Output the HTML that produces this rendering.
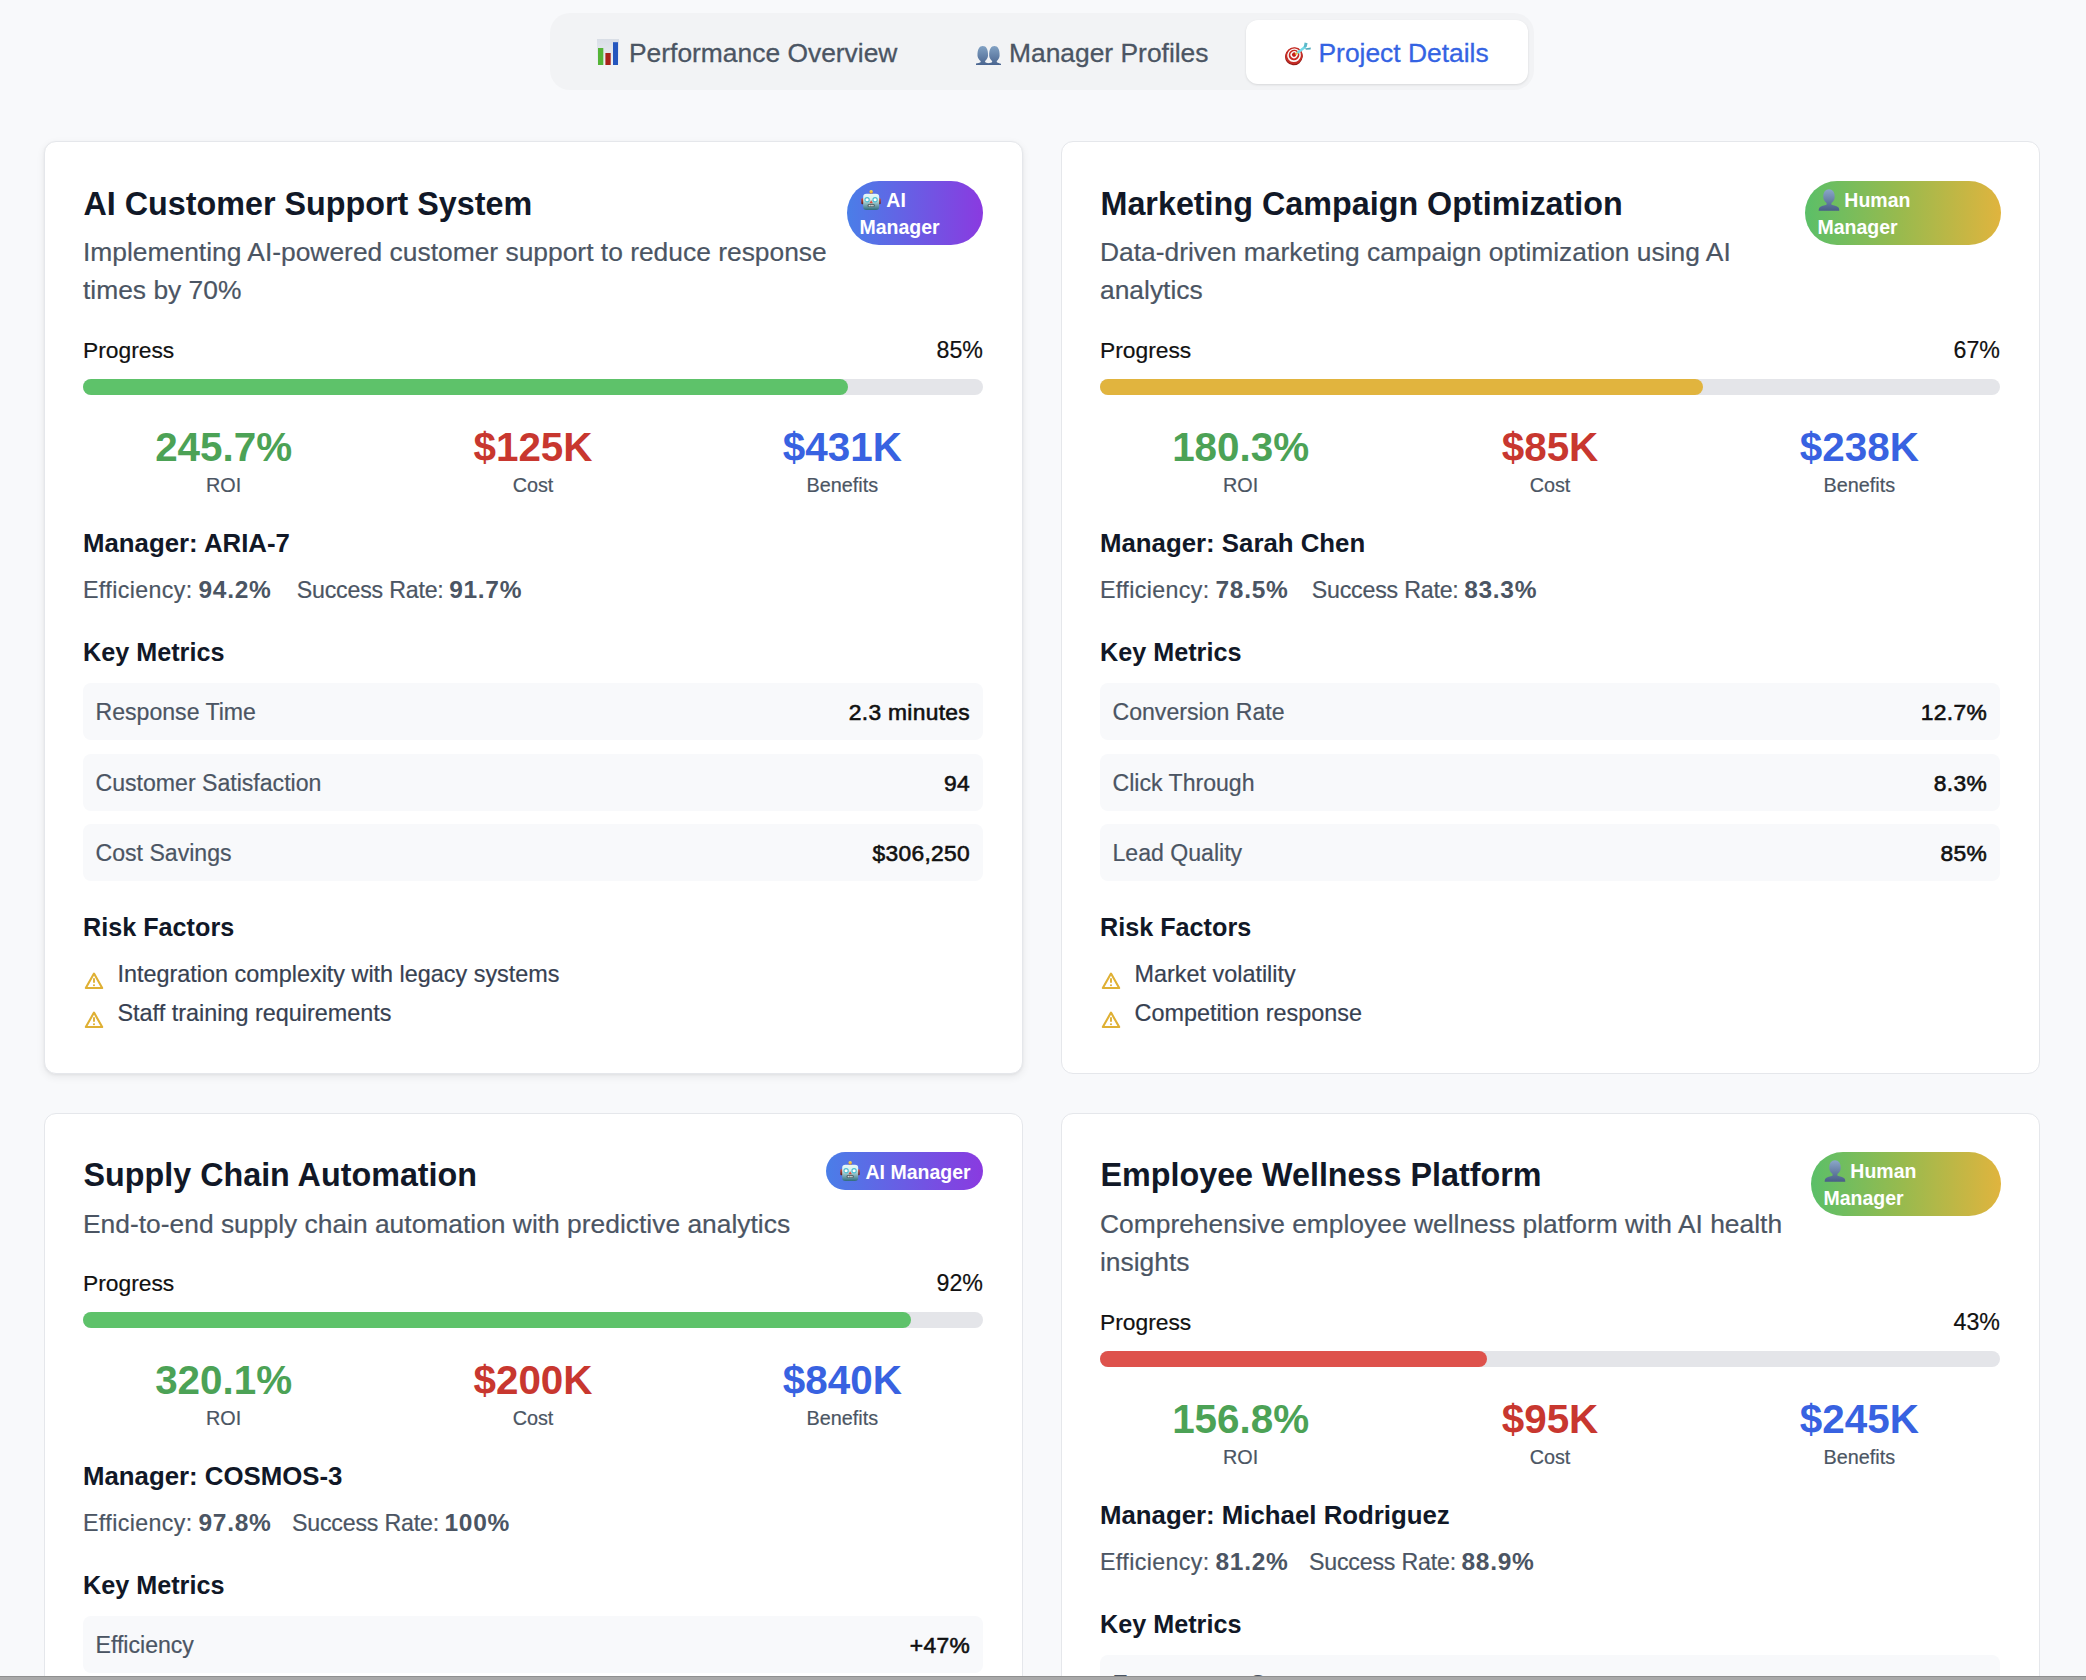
<!DOCTYPE html>
<html><head><meta charset="utf-8"><title>Project Details</title>
<style>
html,body{margin:0;padding:0;}
body{width:2086px;height:1680px;overflow:hidden;position:relative;background:#f8f9fb;font-family:"Liberation Sans",sans-serif;}
.t{position:absolute;margin:0;}
.card{position:absolute;box-sizing:border-box;background:#fff;border:1.5px solid #e5e7eb;border-radius:12px;}
.sh{box-shadow:0 3px 8px rgba(0,0,0,.07),0 1px 3px rgba(0,0,0,.05);}
b{font-weight:700;}
</style></head><body>
<div class="t" style="left:550.00px;top:13.00px;width:984.00px;height:77.00px;background:#f2f3f5;border-radius:20px;"></div><div class="t" style="left:1246.00px;top:20.00px;width:282.00px;height:64.00px;background:#fff;border-radius:12px;box-shadow:0 1px 3px rgba(0,0,0,.08),0 1px 2px rgba(0,0,0,.04);"></div><svg class="t" style="left:597.00px;top:39.00px" width="22" height="26" viewBox="0 0 22 26"><defs><linearGradient id="cbg" x1="0" y1="0" x2="0" y2="1"><stop offset="0" stop-color="#d9dee6"/><stop offset="1" stop-color="#eef1f5"/></linearGradient></defs><rect x="0" y="0" width="22" height="26" fill="url(#cbg)"/><rect x="1" y="9" width="5.3" height="17" fill="#55b437"/><rect x="8.4" y="14" width="5.3" height="12" fill="#a9231a"/><rect x="16" y="3.2" width="5" height="22.8" fill="#2456be"/></svg><div class="t" style="left:629.00px;top:35.55px;font-size:26.4px;line-height:34px;color:#4b5563;white-space:nowrap;-webkit-text-stroke:0.3px #4b5563;">Performance Overview</div><svg class="t" style="left:976.00px;top:44.80px" width="25" height="20" viewBox="0 0 25 20"><defs><linearGradient id="bg1" x1="0" y1="0" x2="0" y2="1"><stop offset="0" stop-color="#82a2c4"/><stop offset="1" stop-color="#4a6590"/></linearGradient></defs><path d="M1.5 11 C1.2 4 3.5 1 6.8 1 C10.2 1 12.3 4 12 11 C11.6 13.5 10.3 15 9 16 L9.3 17.3 C10.6 18 12 18.4 14 18.8 L14 20 L0 20 L0 18.6 C2 18.2 3.5 17.8 4.6 17.3 L4.7 16 C3.3 15 2 13.5 1.5 11Z" fill="url(#bg1)"/><path d="M13.2 11 C12.9 4 15.2 1 18.4 1 C21.7 1 23.9 4 23.6 11 C23.2 13.5 22 15 20.7 16 L20.9 17.3 C22.2 18 23.3 18.4 25 18.8 L25 20 L10 20 L10 18.8 C12.5 18.4 14.5 17.8 16 17.3 L16.2 16 C14.9 15 13.6 13.5 13.2 11Z" fill="url(#bg1)"/></svg><div class="t" style="left:1009.00px;top:35.55px;font-size:26.4px;line-height:34px;color:#4b5563;white-space:nowrap;-webkit-text-stroke:0.3px #4b5563;">Manager Profiles</div><svg class="t" style="left:1283.00px;top:40.00px" width="30" height="26" viewBox="0 0 30 26"><g transform="rotate(-40 11 15.7)"><ellipse cx="10.4" cy="16.3" rx="9" ry="8.6" fill="#8f1c18"/><ellipse cx="11" cy="15.7" rx="8.8" ry="8.4" fill="#c62d25"/><ellipse cx="11.3" cy="15.4" rx="7" ry="6.7" fill="#fbf7f7"/><ellipse cx="11.5" cy="15.2" rx="5.4" ry="5.2" fill="#c92a22"/><ellipse cx="11.7" cy="15" rx="3.7" ry="3.5" fill="#fbf7f7"/><ellipse cx="11.8" cy="14.9" rx="2.2" ry="2.1" fill="#c41e1a"/></g><path d="M12.3 14.4 L15.6 11.9" stroke="#e8c43c" stroke-width="1.8"/><path d="M15.2 12.2 L22 7" stroke="#72dbe9" stroke-width="2.4" stroke-linecap="round"/><path d="M20.6 7.6 L21.6 2.6 L24.6 3.2 L23.6 7 Z" fill="#5bb9ca"/><path d="M21.6 8.4 L27.8 7.6 L27.6 9.6 L23.2 9.8 Z" fill="#4fa9bb"/></svg><div class="t" style="left:1318.50px;top:35.55px;font-size:26.4px;line-height:34px;color:#3463e3;white-space:nowrap;-webkit-text-stroke:0.3px #3463e3;">Project Details</div><div class="card sh" style="left:44px;top:141px;width:979px;height:933px"></div><div class="t" style="left:83.50px;top:184.01px;font-size:32.3px;line-height:40px;color:#111827;font-weight:700;white-space:nowrap;">AI Customer Support System</div><div class="t" style="left:847.00px;top:181.00px;width:136.00px;height:64.00px;background:linear-gradient(90deg,#4a7ee8,#8a3ae0);border-radius:40px;"></div><svg class="t" style="left:860.80px;top:189.50px" width="20" height="20" viewBox="0 0 22 22"><defs><linearGradient id="rb" x1="0" y1="0" x2="0" y2="1"><stop offset="0" stop-color="#e8faf8"/><stop offset=".35" stop-color="#d6eeee"/><stop offset=".6" stop-color="#8fbcc2"/><stop offset="1" stop-color="#2f6a7c"/></linearGradient><linearGradient id="re" x1="0" y1="0" x2="0" y2="1"><stop offset="0" stop-color="#d0503f"/><stop offset="1" stop-color="#5e1a18"/></linearGradient><linearGradient id="ra" x1="0" y1="0" x2="0" y2="1"><stop offset="0" stop-color="#fbe35a"/><stop offset="1" stop-color="#e89a2a"/></linearGradient></defs><rect x="0.3" y="9.2" width="3" height="6.4" rx="1.3" fill="url(#re)"/><rect x="18.7" y="9.2" width="3" height="6.4" rx="1.3" fill="url(#re)"/><rect x="9.6" y="2.5" width="3.2" height="2.5" fill="#6b4a8a"/><circle cx="11.2" cy="1.9" r="1.9" fill="url(#ra)"/><rect x="2.4" y="4" width="17.6" height="18" rx="3.6" fill="url(#rb)"/><circle cx="6.7" cy="10.7" r="2.35" fill="#fff" stroke="#4bbdd2" stroke-width="1.2"/><circle cx="15.5" cy="10.7" r="2.35" fill="#fff" stroke="#4bbdd2" stroke-width="1.2"/><path d="M11.2 11.4 L13 14.6 L9.4 14.6Z" fill="#dc4a3c"/><rect x="7.2" y="15.5" width="7.9" height="3.3" rx="1.6" fill="#465a62"/><rect x="8.4" y="16.3" width="1.6" height="1.7" fill="#d5dcdc"/><rect x="10.35" y="16.3" width="1.6" height="1.7" fill="#d5dcdc"/><rect x="12.3" y="16.3" width="1.6" height="1.7" fill="#d5dcdc"/></svg><div class="t" style="left:886.30px;top:187.44px;font-size:19.5px;line-height:26px;color:#fff;font-weight:700;">AI</div><div class="t" style="left:859.50px;top:213.64px;font-size:19.5px;line-height:26px;color:#fff;font-weight:700;">Manager</div><div class="t" style="left:83.00px;top:232.65px;font-size:26.4px;line-height:38px;color:#4b5563;-webkit-text-stroke:0.2px #4b5563;white-space:nowrap;">Implementing AI-powered customer support to reduce response</div><div class="t" style="left:83.00px;top:270.55px;font-size:26.4px;line-height:38px;color:#4b5563;-webkit-text-stroke:0.2px #4b5563;white-space:nowrap;">times by 70%</div><div class="t" style="left:83.00px;top:334.90px;font-size:22.8px;line-height:30px;color:#111;-webkit-text-stroke:0.2px #111;">Progress</div><div class="t" style="left:83.00px;top:334.76px;font-size:23.2px;line-height:30px;color:#111;-webkit-text-stroke:0.2px #111;width:900.00px;text-align:right;">85%</div><div class="t" style="left:83.00px;top:379.00px;width:900.00px;height:16.00px;background:#e4e5e9;border-radius:8px;"></div><div class="t" style="left:83.00px;top:379.00px;width:765.00px;height:16.00px;background:#5ec26a;border-radius:8px;"></div><div class="t" style="left:83.00px;top:423.20px;font-size:40.4px;line-height:48px;color:#4ca256;font-weight:700;width:281.30px;text-align:center;">245.7%</div><div class="t" style="left:83.00px;top:473.04px;font-size:19.8px;line-height:24px;color:#4b5563;-webkit-text-stroke:0.2px #4b5563;width:281.30px;text-align:center;">ROI</div><div class="t" style="left:392.35px;top:423.20px;font-size:40.4px;line-height:48px;color:#c8372f;font-weight:700;width:281.30px;text-align:center;">$125K</div><div class="t" style="left:392.35px;top:473.04px;font-size:19.8px;line-height:24px;color:#4b5563;-webkit-text-stroke:0.2px #4b5563;width:281.30px;text-align:center;">Cost</div><div class="t" style="left:701.70px;top:423.20px;font-size:40.4px;line-height:48px;color:#3862e1;font-weight:700;width:281.30px;text-align:center;">$431K</div><div class="t" style="left:701.70px;top:473.04px;font-size:19.8px;line-height:24px;color:#4b5563;-webkit-text-stroke:0.2px #4b5563;width:281.30px;text-align:center;">Benefits</div><div class="t" style="left:83.00px;top:526.76px;font-size:25.8px;line-height:32px;color:#111827;font-weight:700;white-space:nowrap;">Manager: ARIA-7</div><div class="t" style="left:83.00px;top:574.96px;font-size:23.2px;line-height:30px;color:#4b5563;-webkit-text-stroke:0.2px #4b5563;white-space:nowrap;letter-spacing:0.4px;">Efficiency:</div><div class="t" style="left:198.50px;top:574.51px;font-size:24.5px;line-height:30px;color:#4b5563;font-weight:700;white-space:nowrap;letter-spacing:0.7px;">94.2%</div><div class="t" style="left:296.70px;top:574.96px;font-size:23.2px;line-height:30px;color:#4b5563;-webkit-text-stroke:0.2px #4b5563;white-space:nowrap;letter-spacing:-0.2px;">Success Rate:</div><div class="t" style="left:449.20px;top:574.51px;font-size:24.5px;line-height:30px;color:#4b5563;font-weight:700;white-space:nowrap;letter-spacing:0.7px;">91.7%</div><div class="t" style="left:83.00px;top:636.07px;font-size:25.2px;line-height:32px;color:#111827;font-weight:700;">Key Metrics</div><div class="t" style="left:83.00px;top:683.00px;width:900.00px;height:57.00px;background:#f8f9fb;border-radius:8px;"></div><div class="t" style="left:95.50px;top:697.00px;font-size:23.1px;line-height:30px;color:#4b5563;-webkit-text-stroke:0.2px #4b5563;white-space:nowrap;">Response Time</div><div class="t" style="left:83.00px;top:697.10px;font-size:22.8px;line-height:30px;color:#111;width:887.00px;text-align:right;-webkit-text-stroke:0.6px #111;letter-spacing:0.3px;">2.3 minutes</div><div class="t" style="left:83.00px;top:753.50px;width:900.00px;height:57.00px;background:#f8f9fb;border-radius:8px;"></div><div class="t" style="left:95.50px;top:767.50px;font-size:23.1px;line-height:30px;color:#4b5563;-webkit-text-stroke:0.2px #4b5563;white-space:nowrap;">Customer Satisfaction</div><div class="t" style="left:83.00px;top:767.60px;font-size:22.8px;line-height:30px;color:#111;width:887.00px;text-align:right;-webkit-text-stroke:0.6px #111;letter-spacing:0.3px;">94</div><div class="t" style="left:83.00px;top:824.00px;width:900.00px;height:57.00px;background:#f8f9fb;border-radius:8px;"></div><div class="t" style="left:95.50px;top:838.00px;font-size:23.1px;line-height:30px;color:#4b5563;-webkit-text-stroke:0.2px #4b5563;white-space:nowrap;">Cost Savings</div><div class="t" style="left:83.00px;top:838.10px;font-size:22.8px;line-height:30px;color:#111;width:887.00px;text-align:right;-webkit-text-stroke:0.6px #111;letter-spacing:0.3px;">$306,250</div><div class="t" style="left:83.00px;top:911.37px;font-size:25.2px;line-height:32px;color:#111827;font-weight:700;">Risk Factors</div><svg class="t" style="left:83.50px;top:971.90px" width="20" height="18" viewBox="0 0 20 18"><path d="M10 1.6 L18.2 16 L1.8 16 Z" fill="none" stroke="#dfb034" stroke-width="2.1" stroke-linejoin="round"/><path d="M10 6.2 L10 10.8" stroke="#dfb034" stroke-width="1.9"/><circle cx="10" cy="13.2" r="1.05" fill="#dfb034"/></svg><div class="t" style="left:117.50px;top:958.79px;font-size:23.4px;line-height:30px;color:#374151;-webkit-text-stroke:0.2px #374151;white-space:nowrap;">Integration complexity with legacy systems</div><svg class="t" style="left:83.50px;top:1010.90px" width="20" height="18" viewBox="0 0 20 18"><path d="M10 1.6 L18.2 16 L1.8 16 Z" fill="none" stroke="#dfb034" stroke-width="2.1" stroke-linejoin="round"/><path d="M10 6.2 L10 10.8" stroke="#dfb034" stroke-width="1.9"/><circle cx="10" cy="13.2" r="1.05" fill="#dfb034"/></svg><div class="t" style="left:117.50px;top:997.79px;font-size:23.4px;line-height:30px;color:#374151;-webkit-text-stroke:0.2px #374151;white-space:nowrap;">Staff training requirements</div><div class="card" style="left:1061px;top:141px;width:979px;height:933px"></div><div class="t" style="left:1100.50px;top:184.01px;font-size:32.3px;line-height:40px;color:#111827;font-weight:700;white-space:nowrap;">Marketing Campaign Optimization</div><div class="t" style="left:1805.00px;top:181.00px;width:196.00px;height:64.00px;background:linear-gradient(90deg,#5bbf68 0%,#98ba4e 48%,#e0b43e 100%);border-radius:40px;"></div><svg class="t" style="left:1817.80px;top:189.00px" width="22" height="22" viewBox="0 0 22 22"><defs><linearGradient id="bu" x1="0" y1="0" x2="0" y2="1"><stop offset="0" stop-color="#8ba7c9"/><stop offset="1" stop-color="#485d86"/></linearGradient></defs><path d="M5.3 8.5 C5 3 7.5 0.3 11 0.3 C14.5 0.3 17 3 16.7 8.5 C16.5 11 15 13 13.4 14 L13.5 15.8 C15.5 16.4 19 16.9 20.5 18.5 C21.2 19.5 21.3 20.6 21.3 21.8 L0.7 21.8 C0.7 20.6 0.8 19.5 1.5 18.5 C3 16.9 6.5 16.4 8.5 15.8 L8.6 14 C7 13 5.5 11 5.3 8.5Z" fill="url(#bu)"/></svg><div class="t" style="left:1844.30px;top:187.44px;font-size:19.5px;line-height:26px;color:#fff;font-weight:700;">Human</div><div class="t" style="left:1817.50px;top:213.64px;font-size:19.5px;line-height:26px;color:#fff;font-weight:700;">Manager</div><div class="t" style="left:1100.00px;top:232.65px;font-size:26.4px;line-height:38px;color:#4b5563;-webkit-text-stroke:0.2px #4b5563;white-space:nowrap;">Data-driven marketing campaign optimization using AI</div><div class="t" style="left:1100.00px;top:270.55px;font-size:26.4px;line-height:38px;color:#4b5563;-webkit-text-stroke:0.2px #4b5563;white-space:nowrap;">analytics</div><div class="t" style="left:1100.00px;top:334.90px;font-size:22.8px;line-height:30px;color:#111;-webkit-text-stroke:0.2px #111;">Progress</div><div class="t" style="left:1100.00px;top:334.76px;font-size:23.2px;line-height:30px;color:#111;-webkit-text-stroke:0.2px #111;width:900.00px;text-align:right;">67%</div><div class="t" style="left:1100.00px;top:379.00px;width:900.00px;height:16.00px;background:#e4e5e9;border-radius:8px;"></div><div class="t" style="left:1100.00px;top:379.00px;width:603.00px;height:16.00px;background:#e1b43e;border-radius:8px;"></div><div class="t" style="left:1100.00px;top:423.20px;font-size:40.4px;line-height:48px;color:#4ca256;font-weight:700;width:281.30px;text-align:center;">180.3%</div><div class="t" style="left:1100.00px;top:473.04px;font-size:19.8px;line-height:24px;color:#4b5563;-webkit-text-stroke:0.2px #4b5563;width:281.30px;text-align:center;">ROI</div><div class="t" style="left:1409.35px;top:423.20px;font-size:40.4px;line-height:48px;color:#c8372f;font-weight:700;width:281.30px;text-align:center;">$85K</div><div class="t" style="left:1409.35px;top:473.04px;font-size:19.8px;line-height:24px;color:#4b5563;-webkit-text-stroke:0.2px #4b5563;width:281.30px;text-align:center;">Cost</div><div class="t" style="left:1718.70px;top:423.20px;font-size:40.4px;line-height:48px;color:#3862e1;font-weight:700;width:281.30px;text-align:center;">$238K</div><div class="t" style="left:1718.70px;top:473.04px;font-size:19.8px;line-height:24px;color:#4b5563;-webkit-text-stroke:0.2px #4b5563;width:281.30px;text-align:center;">Benefits</div><div class="t" style="left:1100.00px;top:526.76px;font-size:25.8px;line-height:32px;color:#111827;font-weight:700;white-space:nowrap;">Manager: Sarah Chen</div><div class="t" style="left:1100.00px;top:574.96px;font-size:23.2px;line-height:30px;color:#4b5563;-webkit-text-stroke:0.2px #4b5563;white-space:nowrap;letter-spacing:0.4px;">Efficiency:</div><div class="t" style="left:1215.50px;top:574.51px;font-size:24.5px;line-height:30px;color:#4b5563;font-weight:700;white-space:nowrap;letter-spacing:0.7px;">78.5%</div><div class="t" style="left:1311.70px;top:574.96px;font-size:23.2px;line-height:30px;color:#4b5563;-webkit-text-stroke:0.2px #4b5563;white-space:nowrap;letter-spacing:-0.2px;">Success Rate:</div><div class="t" style="left:1464.20px;top:574.51px;font-size:24.5px;line-height:30px;color:#4b5563;font-weight:700;white-space:nowrap;letter-spacing:0.7px;">83.3%</div><div class="t" style="left:1100.00px;top:636.07px;font-size:25.2px;line-height:32px;color:#111827;font-weight:700;">Key Metrics</div><div class="t" style="left:1100.00px;top:683.00px;width:900.00px;height:57.00px;background:#f8f9fb;border-radius:8px;"></div><div class="t" style="left:1112.50px;top:697.00px;font-size:23.1px;line-height:30px;color:#4b5563;-webkit-text-stroke:0.2px #4b5563;white-space:nowrap;">Conversion Rate</div><div class="t" style="left:1100.00px;top:697.10px;font-size:22.8px;line-height:30px;color:#111;width:887.00px;text-align:right;-webkit-text-stroke:0.6px #111;letter-spacing:0.3px;">12.7%</div><div class="t" style="left:1100.00px;top:753.50px;width:900.00px;height:57.00px;background:#f8f9fb;border-radius:8px;"></div><div class="t" style="left:1112.50px;top:767.50px;font-size:23.1px;line-height:30px;color:#4b5563;-webkit-text-stroke:0.2px #4b5563;white-space:nowrap;">Click Through</div><div class="t" style="left:1100.00px;top:767.60px;font-size:22.8px;line-height:30px;color:#111;width:887.00px;text-align:right;-webkit-text-stroke:0.6px #111;letter-spacing:0.3px;">8.3%</div><div class="t" style="left:1100.00px;top:824.00px;width:900.00px;height:57.00px;background:#f8f9fb;border-radius:8px;"></div><div class="t" style="left:1112.50px;top:838.00px;font-size:23.1px;line-height:30px;color:#4b5563;-webkit-text-stroke:0.2px #4b5563;white-space:nowrap;">Lead Quality</div><div class="t" style="left:1100.00px;top:838.10px;font-size:22.8px;line-height:30px;color:#111;width:887.00px;text-align:right;-webkit-text-stroke:0.6px #111;letter-spacing:0.3px;">85%</div><div class="t" style="left:1100.00px;top:911.37px;font-size:25.2px;line-height:32px;color:#111827;font-weight:700;">Risk Factors</div><svg class="t" style="left:1100.50px;top:971.90px" width="20" height="18" viewBox="0 0 20 18"><path d="M10 1.6 L18.2 16 L1.8 16 Z" fill="none" stroke="#dfb034" stroke-width="2.1" stroke-linejoin="round"/><path d="M10 6.2 L10 10.8" stroke="#dfb034" stroke-width="1.9"/><circle cx="10" cy="13.2" r="1.05" fill="#dfb034"/></svg><div class="t" style="left:1134.50px;top:958.79px;font-size:23.4px;line-height:30px;color:#374151;-webkit-text-stroke:0.2px #374151;white-space:nowrap;">Market volatility</div><svg class="t" style="left:1100.50px;top:1010.90px" width="20" height="18" viewBox="0 0 20 18"><path d="M10 1.6 L18.2 16 L1.8 16 Z" fill="none" stroke="#dfb034" stroke-width="2.1" stroke-linejoin="round"/><path d="M10 6.2 L10 10.8" stroke="#dfb034" stroke-width="1.9"/><circle cx="10" cy="13.2" r="1.05" fill="#dfb034"/></svg><div class="t" style="left:1134.50px;top:997.79px;font-size:23.4px;line-height:30px;color:#374151;-webkit-text-stroke:0.2px #374151;white-space:nowrap;">Competition response</div><div class="card" style="left:44px;top:1113px;width:979px;height:932px"></div><div class="t" style="left:83.50px;top:1154.81px;font-size:32.3px;line-height:40px;color:#111827;font-weight:700;white-space:nowrap;">Supply Chain Automation</div><div class="t" style="left:826.00px;top:1152.00px;width:157.00px;height:38.00px;background:linear-gradient(90deg,#4a7ee8,#8a3ae0);border-radius:40px;"></div><svg class="t" style="left:839.50px;top:1161.30px" width="20" height="20" viewBox="0 0 22 22"><defs><linearGradient id="rb" x1="0" y1="0" x2="0" y2="1"><stop offset="0" stop-color="#e8faf8"/><stop offset=".35" stop-color="#d6eeee"/><stop offset=".6" stop-color="#8fbcc2"/><stop offset="1" stop-color="#2f6a7c"/></linearGradient><linearGradient id="re" x1="0" y1="0" x2="0" y2="1"><stop offset="0" stop-color="#d0503f"/><stop offset="1" stop-color="#5e1a18"/></linearGradient><linearGradient id="ra" x1="0" y1="0" x2="0" y2="1"><stop offset="0" stop-color="#fbe35a"/><stop offset="1" stop-color="#e89a2a"/></linearGradient></defs><rect x="0.3" y="9.2" width="3" height="6.4" rx="1.3" fill="url(#re)"/><rect x="18.7" y="9.2" width="3" height="6.4" rx="1.3" fill="url(#re)"/><rect x="9.6" y="2.5" width="3.2" height="2.5" fill="#6b4a8a"/><circle cx="11.2" cy="1.9" r="1.9" fill="url(#ra)"/><rect x="2.4" y="4" width="17.6" height="18" rx="3.6" fill="url(#rb)"/><circle cx="6.7" cy="10.7" r="2.35" fill="#fff" stroke="#4bbdd2" stroke-width="1.2"/><circle cx="15.5" cy="10.7" r="2.35" fill="#fff" stroke="#4bbdd2" stroke-width="1.2"/><path d="M11.2 11.4 L13 14.6 L9.4 14.6Z" fill="#dc4a3c"/><rect x="7.2" y="15.5" width="7.9" height="3.3" rx="1.6" fill="#465a62"/><rect x="8.4" y="16.3" width="1.6" height="1.7" fill="#d5dcdc"/><rect x="10.35" y="16.3" width="1.6" height="1.7" fill="#d5dcdc"/><rect x="12.3" y="16.3" width="1.6" height="1.7" fill="#d5dcdc"/></svg><div class="t" style="left:865.50px;top:1159.04px;font-size:19.5px;line-height:26px;color:#fff;font-weight:700;">AI Manager</div><div class="t" style="left:83.00px;top:1204.65px;font-size:26.4px;line-height:38px;color:#4b5563;-webkit-text-stroke:0.2px #4b5563;white-space:nowrap;">End-to-end supply chain automation with predictive analytics</div><div class="t" style="left:83.00px;top:1268.00px;font-size:22.8px;line-height:30px;color:#111;-webkit-text-stroke:0.2px #111;">Progress</div><div class="t" style="left:83.00px;top:1267.86px;font-size:23.2px;line-height:30px;color:#111;-webkit-text-stroke:0.2px #111;width:900.00px;text-align:right;">92%</div><div class="t" style="left:83.00px;top:1312.10px;width:900.00px;height:16.00px;background:#e4e5e9;border-radius:8px;"></div><div class="t" style="left:83.00px;top:1312.10px;width:828.00px;height:16.00px;background:#5ec26a;border-radius:8px;"></div><div class="t" style="left:83.00px;top:1356.30px;font-size:40.4px;line-height:48px;color:#4ca256;font-weight:700;width:281.30px;text-align:center;">320.1%</div><div class="t" style="left:83.00px;top:1406.14px;font-size:19.8px;line-height:24px;color:#4b5563;-webkit-text-stroke:0.2px #4b5563;width:281.30px;text-align:center;">ROI</div><div class="t" style="left:392.35px;top:1356.30px;font-size:40.4px;line-height:48px;color:#c8372f;font-weight:700;width:281.30px;text-align:center;">$200K</div><div class="t" style="left:392.35px;top:1406.14px;font-size:19.8px;line-height:24px;color:#4b5563;-webkit-text-stroke:0.2px #4b5563;width:281.30px;text-align:center;">Cost</div><div class="t" style="left:701.70px;top:1356.30px;font-size:40.4px;line-height:48px;color:#3862e1;font-weight:700;width:281.30px;text-align:center;">$840K</div><div class="t" style="left:701.70px;top:1406.14px;font-size:19.8px;line-height:24px;color:#4b5563;-webkit-text-stroke:0.2px #4b5563;width:281.30px;text-align:center;">Benefits</div><div class="t" style="left:83.00px;top:1459.86px;font-size:25.8px;line-height:32px;color:#111827;font-weight:700;white-space:nowrap;">Manager: COSMOS-3</div><div class="t" style="left:83.00px;top:1508.06px;font-size:23.2px;line-height:30px;color:#4b5563;-webkit-text-stroke:0.2px #4b5563;white-space:nowrap;letter-spacing:0.4px;">Efficiency:</div><div class="t" style="left:198.50px;top:1507.61px;font-size:24.5px;line-height:30px;color:#4b5563;font-weight:700;white-space:nowrap;letter-spacing:0.7px;">97.8%</div><div class="t" style="left:292.00px;top:1508.06px;font-size:23.2px;line-height:30px;color:#4b5563;-webkit-text-stroke:0.2px #4b5563;white-space:nowrap;letter-spacing:-0.2px;">Success Rate:</div><div class="t" style="left:444.50px;top:1507.61px;font-size:24.5px;line-height:30px;color:#4b5563;font-weight:700;white-space:nowrap;letter-spacing:0.7px;">100%</div><div class="t" style="left:83.00px;top:1569.17px;font-size:25.2px;line-height:32px;color:#111827;font-weight:700;">Key Metrics</div><div class="t" style="left:83.00px;top:1616.10px;width:900.00px;height:57.00px;background:#f8f9fb;border-radius:8px;"></div><div class="t" style="left:95.50px;top:1630.10px;font-size:23.1px;line-height:30px;color:#4b5563;-webkit-text-stroke:0.2px #4b5563;white-space:nowrap;">Efficiency</div><div class="t" style="left:83.00px;top:1630.20px;font-size:22.8px;line-height:30px;color:#111;width:887.00px;text-align:right;-webkit-text-stroke:0.6px #111;letter-spacing:0.3px;">+47%</div><div class="t" style="left:83.00px;top:1686.60px;width:900.00px;height:57.00px;background:#f8f9fb;border-radius:8px;"></div><div class="t" style="left:95.50px;top:1700.60px;font-size:23.1px;line-height:30px;color:#4b5563;-webkit-text-stroke:0.2px #4b5563;white-space:nowrap;">Error Rate</div><div class="t" style="left:83.00px;top:1700.70px;font-size:22.8px;line-height:30px;color:#111;width:887.00px;text-align:right;-webkit-text-stroke:0.6px #111;letter-spacing:0.3px;">-82%</div><div class="t" style="left:83.00px;top:1757.10px;width:900.00px;height:57.00px;background:#f8f9fb;border-radius:8px;"></div><div class="t" style="left:95.50px;top:1771.10px;font-size:23.1px;line-height:30px;color:#4b5563;-webkit-text-stroke:0.2px #4b5563;white-space:nowrap;">Inventory Cost</div><div class="t" style="left:83.00px;top:1771.20px;font-size:22.8px;line-height:30px;color:#111;width:887.00px;text-align:right;-webkit-text-stroke:0.6px #111;letter-spacing:0.3px;">-23%</div><div class="t" style="left:83.00px;top:1844.47px;font-size:25.2px;line-height:32px;color:#111827;font-weight:700;">Risk Factors</div><svg class="t" style="left:83.50px;top:1905.00px" width="20" height="18" viewBox="0 0 20 18"><path d="M10 1.6 L18.2 16 L1.8 16 Z" fill="none" stroke="#dfb034" stroke-width="2.1" stroke-linejoin="round"/><path d="M10 6.2 L10 10.8" stroke="#dfb034" stroke-width="1.9"/><circle cx="10" cy="13.2" r="1.05" fill="#dfb034"/></svg><div class="t" style="left:117.50px;top:1891.89px;font-size:23.4px;line-height:30px;color:#374151;-webkit-text-stroke:0.2px #374151;white-space:nowrap;">System integration</div><svg class="t" style="left:83.50px;top:1944.00px" width="20" height="18" viewBox="0 0 20 18"><path d="M10 1.6 L18.2 16 L1.8 16 Z" fill="none" stroke="#dfb034" stroke-width="2.1" stroke-linejoin="round"/><path d="M10 6.2 L10 10.8" stroke="#dfb034" stroke-width="1.9"/><circle cx="10" cy="13.2" r="1.05" fill="#dfb034"/></svg><div class="t" style="left:117.50px;top:1930.89px;font-size:23.4px;line-height:30px;color:#374151;-webkit-text-stroke:0.2px #374151;white-space:nowrap;">Vendor adoption</div><div class="card" style="left:1061px;top:1113px;width:979px;height:932px"></div><div class="t" style="left:1100.50px;top:1154.81px;font-size:32.3px;line-height:40px;color:#111827;font-weight:700;white-space:nowrap;">Employee Wellness Platform</div><div class="t" style="left:1811.00px;top:1152.00px;width:190.00px;height:64.00px;background:linear-gradient(90deg,#5bbf68 0%,#98ba4e 48%,#e0b43e 100%);border-radius:40px;"></div><svg class="t" style="left:1823.80px;top:1160.00px" width="22" height="22" viewBox="0 0 22 22"><defs><linearGradient id="bu" x1="0" y1="0" x2="0" y2="1"><stop offset="0" stop-color="#8ba7c9"/><stop offset="1" stop-color="#485d86"/></linearGradient></defs><path d="M5.3 8.5 C5 3 7.5 0.3 11 0.3 C14.5 0.3 17 3 16.7 8.5 C16.5 11 15 13 13.4 14 L13.5 15.8 C15.5 16.4 19 16.9 20.5 18.5 C21.2 19.5 21.3 20.6 21.3 21.8 L0.7 21.8 C0.7 20.6 0.8 19.5 1.5 18.5 C3 16.9 6.5 16.4 8.5 15.8 L8.6 14 C7 13 5.5 11 5.3 8.5Z" fill="url(#bu)"/></svg><div class="t" style="left:1850.30px;top:1158.44px;font-size:19.5px;line-height:26px;color:#fff;font-weight:700;">Human</div><div class="t" style="left:1823.50px;top:1184.64px;font-size:19.5px;line-height:26px;color:#fff;font-weight:700;">Manager</div><div class="t" style="left:1100.00px;top:1204.65px;font-size:26.4px;line-height:38px;color:#4b5563;-webkit-text-stroke:0.2px #4b5563;white-space:nowrap;">Comprehensive employee wellness platform with AI health</div><div class="t" style="left:1100.00px;top:1242.55px;font-size:26.4px;line-height:38px;color:#4b5563;-webkit-text-stroke:0.2px #4b5563;white-space:nowrap;">insights</div><div class="t" style="left:1100.00px;top:1306.90px;font-size:22.8px;line-height:30px;color:#111;-webkit-text-stroke:0.2px #111;">Progress</div><div class="t" style="left:1100.00px;top:1306.76px;font-size:23.2px;line-height:30px;color:#111;-webkit-text-stroke:0.2px #111;width:900.00px;text-align:right;">43%</div><div class="t" style="left:1100.00px;top:1351.00px;width:900.00px;height:16.00px;background:#e4e5e9;border-radius:8px;"></div><div class="t" style="left:1100.00px;top:1351.00px;width:387.00px;height:16.00px;background:#de524c;border-radius:8px;"></div><div class="t" style="left:1100.00px;top:1395.20px;font-size:40.4px;line-height:48px;color:#4ca256;font-weight:700;width:281.30px;text-align:center;">156.8%</div><div class="t" style="left:1100.00px;top:1445.04px;font-size:19.8px;line-height:24px;color:#4b5563;-webkit-text-stroke:0.2px #4b5563;width:281.30px;text-align:center;">ROI</div><div class="t" style="left:1409.35px;top:1395.20px;font-size:40.4px;line-height:48px;color:#c8372f;font-weight:700;width:281.30px;text-align:center;">$95K</div><div class="t" style="left:1409.35px;top:1445.04px;font-size:19.8px;line-height:24px;color:#4b5563;-webkit-text-stroke:0.2px #4b5563;width:281.30px;text-align:center;">Cost</div><div class="t" style="left:1718.70px;top:1395.20px;font-size:40.4px;line-height:48px;color:#3862e1;font-weight:700;width:281.30px;text-align:center;">$245K</div><div class="t" style="left:1718.70px;top:1445.04px;font-size:19.8px;line-height:24px;color:#4b5563;-webkit-text-stroke:0.2px #4b5563;width:281.30px;text-align:center;">Benefits</div><div class="t" style="left:1100.00px;top:1498.76px;font-size:25.8px;line-height:32px;color:#111827;font-weight:700;white-space:nowrap;">Manager: Michael Rodriguez</div><div class="t" style="left:1100.00px;top:1546.96px;font-size:23.2px;line-height:30px;color:#4b5563;-webkit-text-stroke:0.2px #4b5563;white-space:nowrap;letter-spacing:0.4px;">Efficiency:</div><div class="t" style="left:1215.50px;top:1546.51px;font-size:24.5px;line-height:30px;color:#4b5563;font-weight:700;white-space:nowrap;letter-spacing:0.7px;">81.2%</div><div class="t" style="left:1309.00px;top:1546.96px;font-size:23.2px;line-height:30px;color:#4b5563;-webkit-text-stroke:0.2px #4b5563;white-space:nowrap;letter-spacing:-0.2px;">Success Rate:</div><div class="t" style="left:1461.50px;top:1546.51px;font-size:24.5px;line-height:30px;color:#4b5563;font-weight:700;white-space:nowrap;letter-spacing:0.7px;">88.9%</div><div class="t" style="left:1100.00px;top:1608.07px;font-size:25.2px;line-height:32px;color:#111827;font-weight:700;">Key Metrics</div><div class="t" style="left:1100.00px;top:1655.00px;width:900.00px;height:57.00px;background:#f8f9fb;border-radius:8px;"></div><div class="t" style="left:1112.50px;top:1669.00px;font-size:23.1px;line-height:30px;color:#4b5563;-webkit-text-stroke:0.2px #4b5563;white-space:nowrap;">Engagement Score</div><div class="t" style="left:1100.00px;top:1669.10px;font-size:22.8px;line-height:30px;color:#111;width:887.00px;text-align:right;-webkit-text-stroke:0.6px #111;letter-spacing:0.3px;">78%</div><div class="t" style="left:1100.00px;top:1725.50px;width:900.00px;height:57.00px;background:#f8f9fb;border-radius:8px;"></div><div class="t" style="left:1112.50px;top:1739.50px;font-size:23.1px;line-height:30px;color:#4b5563;-webkit-text-stroke:0.2px #4b5563;white-space:nowrap;">Sick Days</div><div class="t" style="left:1100.00px;top:1739.60px;font-size:22.8px;line-height:30px;color:#111;width:887.00px;text-align:right;-webkit-text-stroke:0.6px #111;letter-spacing:0.3px;">-15%</div><div class="t" style="left:1100.00px;top:1796.00px;width:900.00px;height:57.00px;background:#f8f9fb;border-radius:8px;"></div><div class="t" style="left:1112.50px;top:1810.00px;font-size:23.1px;line-height:30px;color:#4b5563;-webkit-text-stroke:0.2px #4b5563;white-space:nowrap;">Retention</div><div class="t" style="left:1100.00px;top:1810.10px;font-size:22.8px;line-height:30px;color:#111;width:887.00px;text-align:right;-webkit-text-stroke:0.6px #111;letter-spacing:0.3px;">+12%</div><div class="t" style="left:1100.00px;top:1883.37px;font-size:25.2px;line-height:32px;color:#111827;font-weight:700;">Risk Factors</div><svg class="t" style="left:1100.50px;top:1943.90px" width="20" height="18" viewBox="0 0 20 18"><path d="M10 1.6 L18.2 16 L1.8 16 Z" fill="none" stroke="#dfb034" stroke-width="2.1" stroke-linejoin="round"/><path d="M10 6.2 L10 10.8" stroke="#dfb034" stroke-width="1.9"/><circle cx="10" cy="13.2" r="1.05" fill="#dfb034"/></svg><div class="t" style="left:1134.50px;top:1930.79px;font-size:23.4px;line-height:30px;color:#374151;-webkit-text-stroke:0.2px #374151;white-space:nowrap;">Privacy concerns</div><svg class="t" style="left:1100.50px;top:1982.90px" width="20" height="18" viewBox="0 0 20 18"><path d="M10 1.6 L18.2 16 L1.8 16 Z" fill="none" stroke="#dfb034" stroke-width="2.1" stroke-linejoin="round"/><path d="M10 6.2 L10 10.8" stroke="#dfb034" stroke-width="1.9"/><circle cx="10" cy="13.2" r="1.05" fill="#dfb034"/></svg><div class="t" style="left:1134.50px;top:1969.79px;font-size:23.4px;line-height:30px;color:#374151;-webkit-text-stroke:0.2px #374151;white-space:nowrap;">Adoption rate</div><div class="t" style="left:0;top:1676px;width:2086px;height:4px;background:#a9a9a9;border-top:1px solid #8f8f8f;box-sizing:border-box"></div>
</body></html>
